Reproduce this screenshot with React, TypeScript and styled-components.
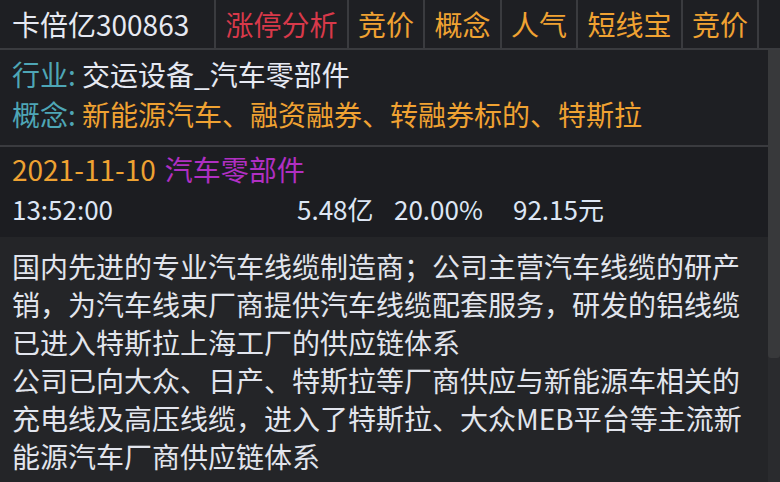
import React from "react";
import styled, { createGlobalStyle } from "styled-components";

const Global = createGlobalStyle`
  html, body { margin: 0; padding: 0; background: #1e1f23; }
  * { box-sizing: border-box; }
`;

const FONT = `"Noto Sans CJK SC", "Noto Sans", sans-serif`;

const Root = styled.div`
  width: 780px;
  height: 482px;
  display: flex;
  flex-direction: column;
  overflow: hidden;
  background: #1e1f23;
  font-family: ${FONT};
`;

const TabBar = styled.div`
  display: flex;
  height: 50px;
  flex-shrink: 0;
  border-bottom: 2px solid #3a3b3f;
  background: #1e1f23;
`;

const TitleTab = styled.div`
  display: flex;
  align-items: center;
  padding: 0 25px 0 12px;
  font-size: 28px;
  color: #e6e9f2;
  border-right: 2px solid #3a3b3f;
  white-space: nowrap;
`;

const Tab = styled.div<{ $color: string }>`
  display: flex;
  align-items: center;
  padding: 0 9.25px;
  font-size: 28px;
  color: ${(p) => p.$color};
  border-right: 2px solid #3a3b3f;
  white-space: nowrap;
`;

const Body = styled.div`
  flex: 1;
  display: flex;
  min-height: 0;
`;

const Content = styled.div`
  flex: 1;
  display: flex;
  flex-direction: column;
  min-width: 0;
  overflow: hidden;
`;

const InfoSection = styled.div`
  padding: 4px 12px 11px;
  border-bottom: 2px solid #3a3b3f;
  background: #1e1f23;
`;

const InfoRow = styled.div`
  font-size: 28px;
  line-height: 40px;
  white-space: nowrap;
`;

const Label = styled.span`
  color: #4ea6b6;
`;

const Value = styled.span<{ $color: string }>`
  color: ${(p) => p.$color};
`;

const DateSection = styled.div`
  padding: 2px 12px 6px;
  background: #1c1d21;
  height: 90px;
`;

const DateRow = styled.div`
  font-size: 28px;
  line-height: 40px;
  white-space: nowrap;
`;

const DateText = styled.span`
  color: #eea232;
  margin-right: 9px;
`;

const Sector = styled.span`
  color: #b02fc2;
`;

const StatsRow = styled.div`
  display: grid;
  grid-template-columns: 285px 97px 119px auto;
  font-size: 26px;
  line-height: 40px;
  color: #dde6f4;
  white-space: nowrap;
`;

const DescSection = styled.div`
  flex: 1;
  background: #242528;
  padding: 10px 16px 0 12px;
`;

const Para = styled.p`
  margin: 0;
  font-size: 28px;
  line-height: 38px;
  color: #e2e5ed;
`;

const ScrollTrack = styled.div`
  width: 12px;
  flex-shrink: 0;
  background: #2a2b2e;
  display: flex;
  flex-direction: column;
`;

const Thumb = styled.div`
  height: 308px;
  background: #38393b;
  border-radius: 0 0 3px 3px;
`;

const tabs: { label: string; color: string }[] = [
  { label: "涨停分析", color: "#d8394a" },
  { label: "竞价", color: "#f0a232" },
  { label: "概念", color: "#f0a232" },
  { label: "人气", color: "#f0a232" },
  { label: "短线宝", color: "#f0a232" },
  { label: "竞价", color: "#f0a232" },
];

export default function App() {
  return (
    <>
      <Global />
      <Root>
        <TabBar>
          <TitleTab>卡倍亿300863</TitleTab>
          {tabs.map((t, i) => (
            <Tab key={i} $color={t.color}>
              {t.label}
            </Tab>
          ))}
        </TabBar>
        <Body>
          <Content>
            <InfoSection>
              <InfoRow>
                <Label>行业: </Label>
                <Value $color="#e6e9f2">交运设备_汽车零部件</Value>
              </InfoRow>
              <InfoRow>
                <Label>概念: </Label>
                <Value $color="#f0a232">新能源汽车、融资融券、转融券标的、特斯拉</Value>
              </InfoRow>
            </InfoSection>
            <DateSection>
              <DateRow>
                <DateText>2021-11-10</DateText>
                <Sector>汽车零部件</Sector>
              </DateRow>
              <StatsRow>
                <span>13:52:00</span>
                <span>5.48亿</span>
                <span>20.00%</span>
                <span>92.15元</span>
              </StatsRow>
            </DateSection>
            <DescSection>
              <Para>
                国内先进的专业汽车线缆制造商；公司主营汽车线缆的研产销，为汽车线束厂商提供汽车线缆配套服务，研发的铝线缆已进入特斯拉上海工厂的供应链体系
              </Para>
              <Para>
                公司已向大众、日产、特斯拉等厂商供应与新能源车相关的充电线及高压线缆，进入了特斯拉、大众MEB平台等主流新能源汽车厂商供应链体系
              </Para>
            </DescSection>
          </Content>
          <ScrollTrack>
            <Thumb />
          </ScrollTrack>
        </Body>
      </Root>
    </>
  );
}
